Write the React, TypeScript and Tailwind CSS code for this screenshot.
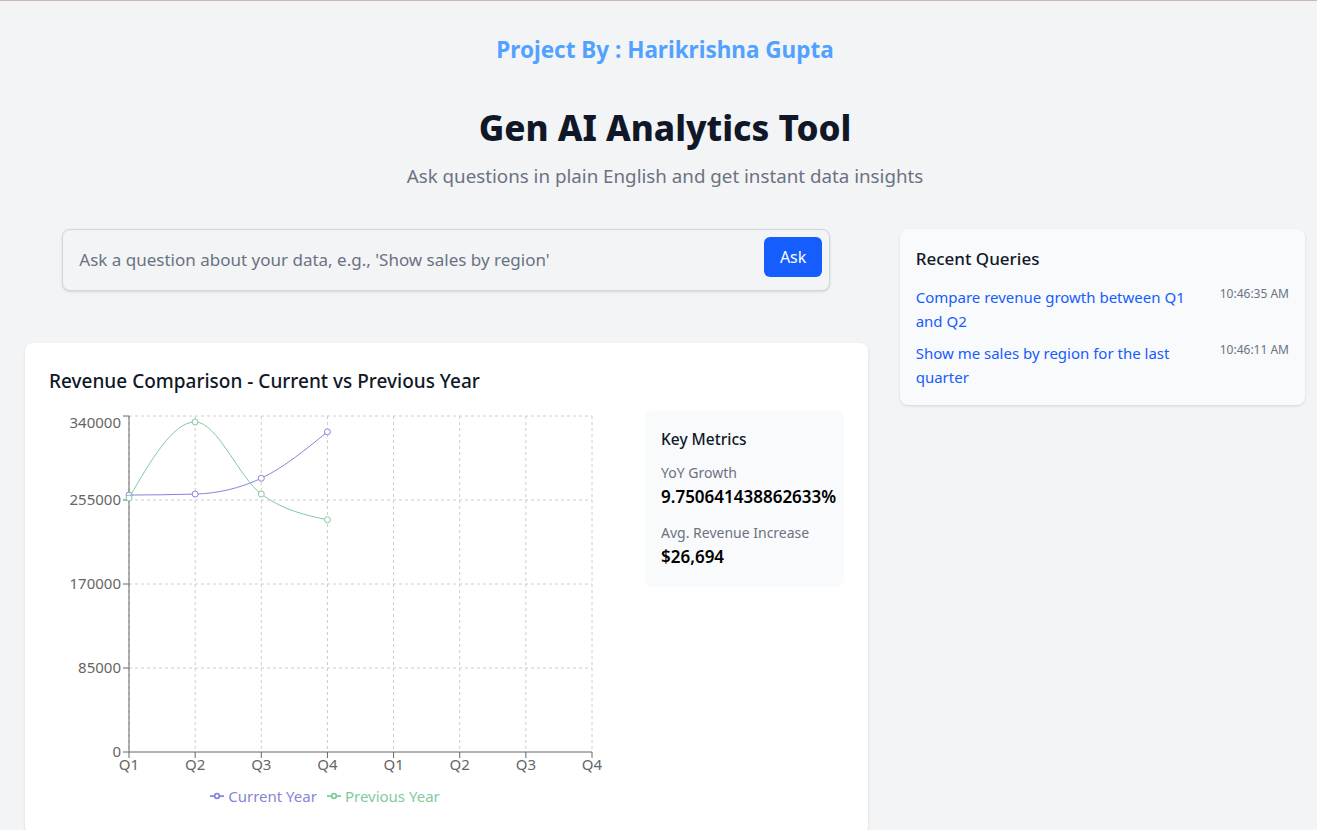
import { FC } from 'react';

type Pt = [number, number];

const FONT = "font-['Noto_Sans',sans-serif]";

const quarters = ['Q1', 'Q2', 'Q3', 'Q4', 'Q1', 'Q2', 'Q3', 'Q4'];
const currentYear = [260000, 261000, 277000, 324000];
const previousYear = [257000, 334000, 261000, 235000];
const yTicks = [0, 85000, 170000, 255000, 340000];

const recentQueries = [
  { text: 'Compare revenue growth between Q1 and Q2', time: '10:46:35 AM' },
  { text: 'Show me sales by region for the last quarter', time: '10:46:11 AM' },
];

// chart geometry (local svg coords)
const W = 572;
const H = 370;
const left = 80;
const right = 543;
const top = 5;
const bottom = 341;
const xAt = (i: number) => left + (i * (right - left)) / (quarters.length - 1);
const yAt = (v: number) => bottom - (v / 340000) * (bottom - top);

// same maths as d3 curveMonotoneX
const monotonePath = (pts: Pt[]) => {
  const n = pts.length;
  const h: number[] = [];
  const s: number[] = [];
  for (let i = 0; i < n - 1; i++) {
    h[i] = pts[i + 1][0] - pts[i][0];
    s[i] = (pts[i + 1][1] - pts[i][1]) / h[i];
  }
  const t: number[] = new Array(n).fill(0);
  for (let i = 1; i < n - 1; i++) {
    const s0 = s[i - 1];
    const s1 = s[i];
    const p = (s0 * h[i] + s1 * h[i - 1]) / (h[i - 1] + h[i]);
    t[i] = (Math.sign(s0) + Math.sign(s1)) * Math.min(Math.abs(s0), Math.abs(s1), 0.5 * Math.abs(p)) || 0;
  }
  t[0] = (3 * s[0] - t[1]) / 2;
  t[n - 1] = (3 * s[n - 2] - t[n - 2]) / 2;
  let d = `M${pts[0][0]},${pts[0][1]}`;
  for (let i = 0; i < n - 1; i++) {
    const dx = h[i] / 3;
    d += ` C${pts[i][0] + dx},${pts[i][1] + dx * t[i]} ${pts[i + 1][0] - dx},${pts[i + 1][1] - dx * t[i + 1]} ${pts[i + 1][0]},${pts[i + 1][1]}`;
  }
  return d;
};

const Series: FC<{ data: number[]; color: string }> = ({ data, color }) => {
  const pts: Pt[] = data.map((v, i) => [xAt(i), yAt(v)]);
  return (
    <g>
      <path d={monotonePath(pts)} fill="none" stroke={color} strokeWidth={1} />
      {pts.map(([x, y], i) => (
        <circle key={i} cx={x} cy={y} r={3} fill="#fff" stroke={color} strokeWidth={1} />
      ))}
    </g>
  );
};

const LegendIcon: FC<{ color: string }> = ({ color }) => (
  <svg width="14" height="14" viewBox="0 0 32 32">
    <path
      strokeWidth="4"
      fill="none"
      stroke={color}
      d="M0,16h10.667A5.333,5.333,0,1,1,21.333,16H32M21.333,16A5.333,5.333,0,1,1,10.667,16"
    />
  </svg>
);

const RevenueChart: FC = () => (
  <div className="w-[572px] shrink-0">
    <svg width={W} height={H} className="block">
      {/* grid */}
      {yTicks.slice(1).map((v) => (
        <line key={v} x1={left} x2={right} y1={yAt(v)} y2={yAt(v)} stroke="#ccc" strokeDasharray="3 3" />
      ))}
      {quarters.map((_, i) => (
        <line key={i} x1={xAt(i)} x2={xAt(i)} y1={top} y2={bottom} stroke="#ccc" strokeDasharray="3 3" />
      ))}
      {/* axes */}
      <line x1={left} x2={left} y1={top} y2={bottom} stroke="#666" />
      <line x1={left} x2={right} y1={bottom} y2={bottom} stroke="#666" />
      {yTicks.map((v) => (
        <g key={v}>
          <line x1={left - 6} x2={left} y1={yAt(v)} y2={yAt(v)} stroke="#666" />
          <text
            x={left - 8}
            y={v === 340000 ? yAt(v) + 7 : yAt(v)}
            dy="0.355em"
            textAnchor="end"
            fill="#666"
            fontSize={15}
          >
            {v}
          </text>
        </g>
      ))}
      {quarters.map((q, i) => (
        <g key={i}>
          <line x1={xAt(i)} x2={xAt(i)} y1={bottom} y2={bottom + 6} stroke="#666" />
          <text x={xAt(i)} y={bottom + 13} dy="0.355em" textAnchor="middle" fill="#666" fontSize={15}>
            {q}
          </text>
        </g>
      ))}
      <Series data={currentYear} color="#8884d8" />
      <Series data={previousYear} color="#82ca9d" />
    </svg>
    <div className="h-[30px] flex items-center justify-center gap-[10px] pr-[20px] text-[15px]">
      <div className="flex items-center gap-1 text-[#8884d8]">
        <LegendIcon color="#8884d8" />
        <span>Current Year</span>
      </div>
      <div className="flex items-center gap-1 text-[#82ca9d]">
        <LegendIcon color="#82ca9d" />
        <span>Previous Year</span>
      </div>
    </div>
  </div>
);

const App: FC = () => {
  return (
    <div className={`min-h-screen bg-gray-100 border-t border-[#c8b9b3] ${FONT}`}>
      <div className="ml-[25px] w-[1280px]">
        <div className="text-center">
          <div className="pt-[33px] text-[22.5px] leading-8 font-bold text-blue-400">Project By : Harikrishna Gupta</div>
          <h1 className="mt-[42px] text-[35px] leading-10 font-extrabold text-gray-900">Gen AI Analytics Tool</h1>
          <p className="mt-[14px] text-[18.75px] leading-7 text-gray-500">
            Ask questions in plain English and get instant data insights
          </p>
        </div>

        <div className="mt-[39px] grid grid-cols-3 gap-8 items-start">
          <div className="col-span-2">
            <form className="relative max-w-3xl mx-auto" onSubmit={(e) => e.preventDefault()}>
              <input
                type="text"
                placeholder="Ask a question about your data, e.g., 'Show sales by region'"
                className="w-full p-4 text-[17px] leading-7 border border-gray-300 rounded-lg shadow bg-gray-100 placeholder:text-gray-500 outline-none"
              />
              <button
                type="submit"
                className="absolute right-2 top-2 px-4 py-2 bg-blue-600 text-white rounded-md text-base"
              >
                Ask
              </button>
            </form>

            <div className="mt-[52px] bg-white rounded-lg shadow-sm p-6">
              <h2 className="text-[19px] leading-7 font-medium text-gray-900 mb-4">
                Revenue Comparison - Current vs Previous Year
              </h2>
              <div className="flex gap-6 items-start">
                <RevenueChart />
                <div className="w-[199px] bg-gray-50 rounded-lg p-4">
                  <h3 className="text-[15.5px] leading-6 font-medium text-gray-900 mb-3">Key Metrics</h3>
                  <div className="space-y-3">
                    <div>
                      <p className="text-sm text-gray-500">YoY Growth</p>
                      <p className="text-[17px] leading-7 font-semibold text-black">9.750641438862633%</p>
                    </div>
                    <div>
                      <p className="text-sm text-gray-500">Avg. Revenue Increase</p>
                      <p className="text-[17px] leading-7 font-semibold text-black">$26,694</p>
                    </div>
                  </div>
                </div>
              </div>
            </div>
          </div>

          <div className="bg-gray-50 rounded-lg shadow p-4">
            <h2 className="text-[17px] leading-7 font-medium text-gray-900 mb-3">Recent Queries</h2>
            <div className="space-y-2">
              {recentQueries.map((q) => (
                <div key={q.time} className="flex justify-between items-start gap-4">
                  <span className="text-[15px] leading-6 text-blue-600">{q.text}</span>
                  <span className="text-xs text-gray-500 whitespace-nowrap pt-[1px]">{q.time}</span>
                </div>
              ))}
            </div>
          </div>
        </div>
      </div>
    </div>
  );
};

export default App;
